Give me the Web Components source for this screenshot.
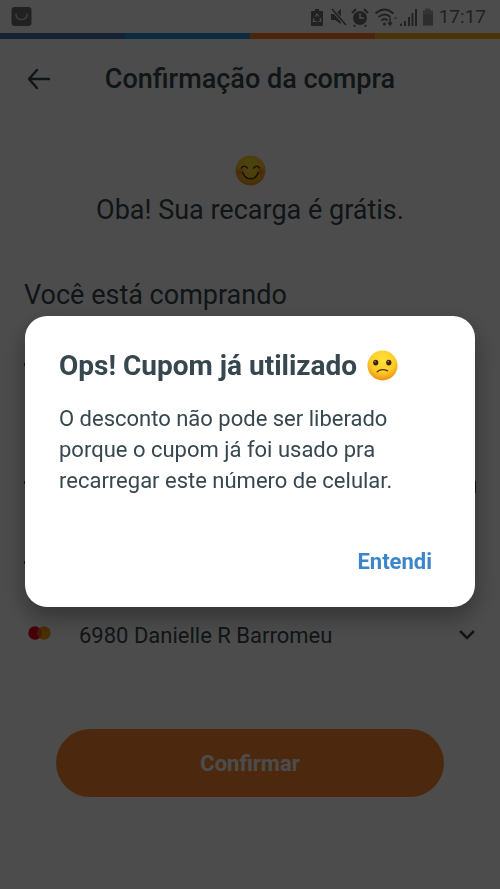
<!DOCTYPE html>
<html lang="pt-BR">
<head>
<meta charset="utf-8">
<meta name="viewport" content="width=device-width, initial-scale=1">
<title>Confirmação da compra</title>
<style>
  html, body { margin: 0; min-height: 100%; background: #fff; }
  body { font-family: Roboto, "Liberation Sans", sans-serif; color: #37474f; }
</style>
</head>
<body>
<checkout-app></checkout-app>
<script>
const define = (name, html) => {
  const template = document.createElement('template');
  template.innerHTML = html;
  customElements.define(name, class extends HTMLElement {
    constructor() {
      super();
      this.attachShadow({ mode: 'open' }).append(template.content.cloneNode(true));
    }
  });
};

define('face-emoji', `
  <style>
    :host { display: inline-block; width: 31px; height: 31px; }
    svg { display: block; width: 100%; height: 100%; }
    .sad, :host([mood="sad"]) .happy { display: none; }
    :host([mood="sad"]) .sad { display: inline; }
  </style>
  <svg viewBox="0 0 32 32" aria-hidden="true">
    <defs>
      <radialGradient id="skin" cx=".5" cy=".3" r=".72">
        <stop offset="0" stop-color="#ffe13a"/><stop offset=".6" stop-color="#fccb28"/><stop offset="1" stop-color="#ee8a12"/>
      </radialGradient>
      <radialGradient id="blush"><stop offset="0" stop-color="#f4602c" stop-opacity=".75"/><stop offset="1" stop-color="#f4602c" stop-opacity="0"/></radialGradient>
    </defs>
    <circle cx="16" cy="16" r="15.5" fill="url(#skin)"/>
    <g class="happy">
      <circle cx="5.5" cy="17.5" r="5" fill="url(#blush)"/><circle cx="26.500" cy="17.5" r="5" fill="url(#blush)"/>
      <g fill="none" stroke="#5a3009" stroke-width="1.5" stroke-linecap="round">
        <path d="M6.500 13.500Q9.500 9.500 12.700 13.500M19.300 13.500Q22.500 9.500 25.500 13.500"/>
        <path d="M8 18Q10 24.500 16 24.500T24 18"/>
      </g>
    </g>
    <g class="sad">
      <ellipse cx="9" cy="13" rx="2.700" ry="3" fill="#3e2410"/><ellipse cx="22.500" cy="13" rx="2.700" ry="3" fill="#3e2410"/>
      <circle cx="8.300" cy="12" r=".8" fill="#a98963"/><circle cx="21.800" cy="12" r=".8" fill="#a98963"/>
      <path d="M10.500 22.500Q15 18.500 21.300 21.500" fill="none" stroke="#5a3009" stroke-width="1.300" stroke-linecap="round"/>
    </g>
  </svg>`);

define('status-bar', `
  <style>
    :host { display: flex; align-items: center; justify-content: space-between; height: 33px; padding: 0 14px 0 11px; color: #707070; }
    svg { display: block; }
    .tray { display: flex; align-items: center; gap: 5px; }
    .signal { margin-left: -13px; }
    time { font-size: 19px; line-height: 24px; color: #707070; }
  </style>
  <svg width="21" height="21" viewBox="0 0 21 21" aria-hidden="true">
    <rect x=".5" y="1" width="20" height="19" rx="3" fill="#707070"/>
    <path d="M5 8q0 5.500 5.500 5.500T16 8" fill="none" stroke="#c8c8c8" stroke-width="1.600" stroke-linecap="round"/>
  </svg>
  <div class="tray">
    <svg width="96" height="20" viewBox="0 0 96 20" fill="currentColor" aria-hidden="true">
      <path d="M4 2h4v2h3a1 1 0 0 1 1 1v13a1 1 0 0 1-1 1H1a1 1 0 0 1-1-1V5a1 1 0 0 1 1-1h3z"/>
      <path d="M4.200 9.500 6 7l1.800 2.500M9 11l1 3-2.500.5M5.500 14.500H2.300L3.200 11.500" fill="none" stroke="#fff" stroke-width="1.200"/>
      <path d="M20 7h4l6-5v15l-6-4h-4z"/><path d="m21 2 14 16" stroke="#fff" stroke-width="3.500"/><path d="m21 2 14 16" stroke="currentColor" stroke-width="1.600"/>
      <circle cx="49" cy="11" r="7"/><path d="m41 6 4-4M57 6l-4-4M44 18l-1 1.500M54 18l1 1.500" stroke="currentColor" stroke-width="2.200"/><path d="M49 6.500V11h4" fill="none" stroke="#fff" stroke-width="1.500"/>
      <g fill="none" stroke="currentColor" stroke-width="1.900"><path d="M64.500 6.500Q73.500-1.500 82.500 6.500M67.500 10q6-5 12 0M70.500 13.500q3-3 6 0"/></g>
      <circle cx="73.500" cy="17" r="1.600"/><path d="M79 11v7M77 15.500l2 2.500 2-2.500" fill="none" stroke="currentColor" stroke-width="1.500"/><path d="m82.500 12 2-3 2 3z" opacity=".5"/>
    </svg>
    <svg class="signal" width="35" height="20" viewBox="0 0 35 20" fill="currentColor" aria-hidden="true">
      <path d="M1 19v-2l2-1v3zM5 14h2v5H5zM9 10h2v9H9zM12.500 6h2v13h-2zM16 2h2v17h-2z"/>
      <path d="M26 1.500h5v2h3v15H24v-15h2z" opacity=".55"/><path d="M24 7h10v11.500H24z" opacity=".4"/>
    </svg>
    <time>17:17</time>
  </div>`);

define('brand-stripe', `
  <style>
    :host { display: grid; grid-template-columns: repeat(4, 1fr); height: 6px; }
    i:nth-of-type(1) { background: #4474b0; } i:nth-of-type(2) { background: #2892d8; }
    i:nth-of-type(3) { background: #fd7c1e; } i:nth-of-type(4) { background: #fdb01e; }
  </style><i></i><i></i><i></i><i></i>`);

define('page-header', `
  <style>
    :host { display: grid; grid-template-columns: 54px 1fr 54px; align-items: center; height: 80px; }
    button { border: 0; background: none; padding: 0 0 0 27px; color: inherit; }
    svg { display: block; }
    h1 { margin: 0; text-align: center; font-size: 27px; line-height: 36px; font-weight: 500; }
  </style>
  <button type="button" aria-label="Voltar"><svg width="24" height="22" viewBox="0 0 24 22" fill="none" stroke="currentColor" stroke-width="2.500" stroke-linecap="round" stroke-linejoin="round"><path d="M10 2 2 11l8 9M2 11h20"/></svg></button>
  <h1><slot></slot></h1>`);

define('free-notice', `
  <style>
    :host { display: flex; flex-direction: column; align-items: center; gap: 6px; padding-top: 36px; font-size: 27px; line-height: 36px; }
    p { margin: 0; }
  </style><face-emoji></face-emoji><p><slot></slot></p>`);

define('purchase-summary', `
  <style>
    :host { display: block; padding: 49px 24px 0; }
    h2 { margin: 0; font-size: 27px; line-height: 36px; font-weight: 400; }
    .rows { display: grid; grid-template-rows: 80px 80px 98px; padding-top: 50px; }
    .row { display: flex; justify-content: space-between; align-items: flex-start; }
    .row i { width: 2px; height: 3px; background: currentColor; }
    .row + .row { padding-top: 38px; }
    .row i + i { height: 12px; }
  </style>
  <h2><slot></slot></h2>
  <div class="rows" aria-hidden="true"><div class="row"><i></i></div><div class="row"><i></i><i></i></div><div class="row"><i></i></div></div>`);

define('card-picker', `
  <style>
    :host { display: grid; grid-template-columns: 55px 1fr 18px; align-items: center; padding: 0 24px; }
    svg { display: block; }
    select { appearance: none; border: 0; margin: 0; padding: 0; background: none; font: inherit; font-size: 22px; line-height: 30px; height: 30px; color: inherit; opacity: 1; width: 100%; }
  </style>
  <svg width="32" height="24" viewBox="0 0 32 24" aria-hidden="true"><circle cx="11" cy="9" r="6.700" fill="#e8001b"/><circle cx="20" cy="9" r="6.700" fill="#f79e1b"/><path d="M15.500 4a6.700 6.700 0 0 1 0 10 6.700 6.700 0 0 1 0-10" fill="#e85a10"/></svg>
  <select aria-label="Cartão"><option>6980 Danielle R Barromeu</option></select>
  <svg width="18" height="14" viewBox="0 0 18 14" fill="none" stroke="currentColor" stroke-width="2.600" aria-hidden="true"><path d="m2 2 7 7 7-7"/></svg>`);

define('confirm-button', `
  <style>
    :host { display: block; padding: 78px 56px 0; }
    button { display: block; width: 100%; height: 68px; border: 0; border-radius: 34px; background: #fd892f; color: #fff; font: inherit; font-size: 22px; font-weight: 700; }
  </style><button type="button"><slot></slot></button>`);

define('alert-dialog', `
  <style>
    :host { position: fixed; inset: 0; display: flex; align-items: center; padding: 33px 25px 0; background: rgba(0,0,0,.7); }
    section { box-sizing: border-box; width: 100%; padding: 31px 34px 27px; border-radius: 22px; background: #fff; box-shadow: 0 10px 24px rgba(0,0,0,.35); }
    h2 { display: flex; align-items: center; gap: 10px; margin: 0; font-size: 28px; line-height: 38px; font-weight: 700; }
    p { margin: 18px 0 0; font-size: 22px; line-height: 31px; }
    footer { display: flex; justify-content: flex-end; margin-top: 48px; }
    button { border: 0; background: none; padding: 0 9px; color: #3d85c9; font: inherit; font-size: 22px; line-height: 36px; font-weight: 700; }
  </style>
  <section role="dialog" aria-modal="true" aria-labelledby="title">
    <h2 id="title"><slot name="title"></slot><face-emoji mood="sad"></face-emoji></h2>
    <p><slot></slot></p>
    <footer><button type="button"><slot name="action"></slot></button></footer>
  </section>`);

define('checkout-app', `
  <style>:host { display: block; }</style>
  <status-bar></status-bar>
  <brand-stripe></brand-stripe>
  <page-header>Confirmação da compra</page-header>
  <main>
    <free-notice>Oba! Sua recarga é grátis.</free-notice>
    <purchase-summary>Você está comprando</purchase-summary>
    <card-picker></card-picker>
    <confirm-button>Confirmar</confirm-button>
  </main>
  <alert-dialog>
    <span slot="title">Ops! Cupom já utilizado</span>
    O desconto não pode ser liberado<br>porque o cupom já foi usado pra<br>recarregar este número de celular.
    <span slot="action">Entendi</span>
  </alert-dialog>`);
</script>
</body>
</html>
